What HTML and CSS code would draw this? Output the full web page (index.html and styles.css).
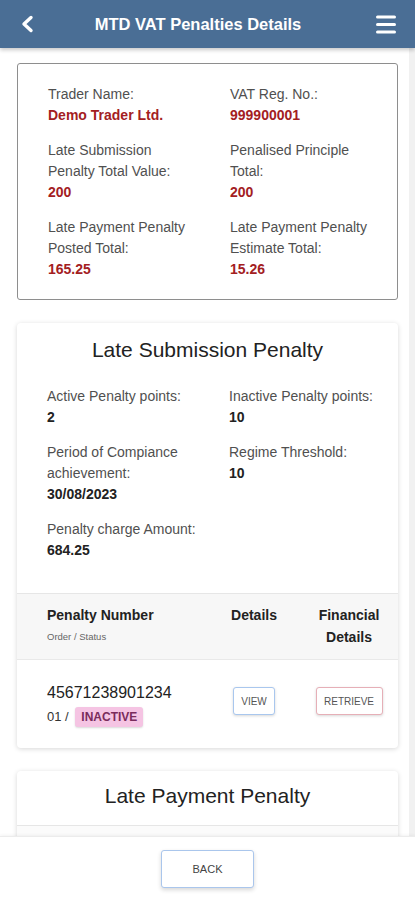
FILE: index.html
```html
<!DOCTYPE html>
<html lang="en">
<head>
<meta charset="utf-8">
<title>MTD VAT Penalties Details</title>
<link rel="stylesheet" href="styles.css">
</head>
<body>
<header class="topbar">
  <span class="icon-back">
    <svg width="14" height="18" viewBox="0 0 14 18"><path d="M11 2.5 L4 9 L11 15.5" stroke="#fff" stroke-width="3.4" fill="none" stroke-linecap="round" stroke-linejoin="round"/></svg>
  </span>
  <h1 class="topbar-title">MTD VAT Penalties Details</h1>
  <span class="icon-menu">
    <svg width="20" height="19" viewBox="0 0 20 19"><g stroke="#fff" stroke-width="3" stroke-linecap="round"><line x1="1.5" y1="2" x2="18.5" y2="2"/><line x1="1.5" y1="9.5" x2="18.5" y2="9.5"/><line x1="1.5" y1="17" x2="18.5" y2="17"/></g></svg>
  </span>
</header>

<div class="viewport">
  <main class="content">
    <section class="summary-card">
      <div class="fields">
        <div class="field"><div class="label">Trader Name:</div><div class="value red">Demo Trader Ltd.</div></div>
        <div class="field"><div class="label">VAT Reg. No.:</div><div class="value red">999900001</div></div>
        <div class="field"><div class="label">Late Submission<br>Penalty Total Value:</div><div class="value red">200</div></div>
        <div class="field"><div class="label">Penalised Principle<br>Total:</div><div class="value red">200</div></div>
        <div class="field"><div class="label">Late Payment Penalty<br>Posted Total:</div><div class="value red">165.25</div></div>
        <div class="field"><div class="label">Late Payment Penalty<br>Estimate Total:</div><div class="value red">15.26</div></div>
      </div>
    </section>

    <section class="card">
      <h2 class="card-title">Late Submission Penalty</h2>
      <div class="fields card-fields">
        <div class="field"><div class="label">Active Penalty points:</div><div class="value">2</div></div>
        <div class="field"><div class="label">Inactive Penalty points:</div><div class="value">10</div></div>
        <div class="field"><div class="label">Period of Compiance<br>achievement:</div><div class="value">30/08/2023</div></div>
        <div class="field"><div class="label">Regime Threshold:</div><div class="value">10</div></div>
        <div class="field"><div class="label">Penalty charge Amount:</div><div class="value">684.25</div></div>
      </div>
      <div class="table-head">
        <div class="th-main">
          <div class="th-title">Penalty Number</div>
          <div class="th-sub">Order / Status</div>
        </div>
        <div class="th-center">Details</div>
        <div class="th-center th-fin">Financial<br>Details</div>
      </div>
      <div class="table-row">
        <div class="td-main">
          <div class="penalty-no">45671238901234</div>
          <div class="order">01 / <span class="badge">INACTIVE</span></div>
        </div>
        <div class="td-center"><button class="btn btn-blue">VIEW</button></div>
        <div class="td-center td-fin"><button class="btn btn-red">RETRIEVE</button></div>
      </div>
    </section>

    <section class="card">
      <h2 class="card-title card-title-lpp">Late Payment Penalty</h2>
      <div class="card-body-lpp"></div>
    </section>
  </main>
  <div class="scroll-track"></div>
</div>

<footer class="bottombar">
  <button class="btn btn-back">BACK</button>
</footer>
</body>
</html>
```
FILE: styles.css
```css
* { box-sizing: border-box; }

html, body {
  margin: 0;
  padding: 0;
}

body {
  width: 415px;
  height: 900px;
  overflow: hidden;
  display: flex;
  flex-direction: column;
  background: #ffffff;
  font-family: "Liberation Sans", Arial, sans-serif;
  color: #333;
}

.topbar {
  height: 48px;
  flex: 0 0 48px;
  background: #4a6e95;
  display: flex;
  align-items: center;
  padding: 0 19px 0 20px;
  box-shadow: 0 2px 4px rgba(0, 0, 0, 0.22);
  position: relative;
  z-index: 2;
}

.icon-back, .icon-menu {
  display: flex;
  align-items: center;
}

.topbar-title {
  flex: 1;
  margin: 0;
  padding-right: 14px;
  text-align: center;
  color: #ffffff;
  font-size: 16.5px;
  font-weight: bold;
}

.viewport {
  flex: 1;
  display: flex;
  overflow: hidden;
  background: #ffffff;
}

.content {
  flex: 1;
  padding: 15px 11px 0 17px;
  display: flex;
  flex-direction: column;
  gap: 23px;
}

.scroll-track {
  width: 6px;
  flex: 0 0 6px;
  background: #f1f1f1;
}

.summary-card {
  border: 1px solid #8e8e8e;
  border-radius: 3px;
  padding: 20px 10px 19px 30px;
  background: #fff;
}

.fields {
  display: grid;
  grid-template-columns: 150px 150px;
  column-gap: 32px;
  row-gap: 14px;
}

.field {
  font-size: 14px;
  line-height: 21px;
}

.label {
  color: #505050;
  white-space: nowrap;
}

.value {
  font-weight: bold;
  color: #222;
}

.value.red {
  color: #a3201f;
}

.card {
  background: #fff;
  border-radius: 4px;
  box-shadow: 0 1px 5px rgba(0, 0, 0, 0.16);
  flex-shrink: 0;
}

.card-title {
  margin: 0;
  padding-top: 14px;
  text-align: center;
  font-size: 21px;
  line-height: 26px;
  font-weight: normal;
  color: #222;
}

.card-fields {
  padding: 23px 10px 32px 30px;
}

.table-head {
  display: grid;
  grid-template-columns: 172px 70px 98px;
  padding: 10px 10px 11px 30px;
  background: #f7f7f7;
  border-top: 1px solid #e6e6e6;
  border-bottom: 1px solid #e9e9e9;
}

.th-title {
  font-size: 14px;
  line-height: 22px;
  font-weight: bold;
  color: #222;
}

.th-sub {
  font-size: 9.5px;
  line-height: 22px;
  color: #666;
}

.th-center {
  text-align: center;
  font-size: 14px;
  line-height: 22px;
  font-weight: bold;
  color: #222;
}

.th-fin, .td-fin {
  padding-left: 22px;
}

.table-row {
  display: grid;
  grid-template-columns: 172px 70px 98px;
  padding: 22px 10px 18px 30px;
}

.penalty-no {
  font-size: 16px;
  line-height: 22px;
  color: #222;
}

.order {
  font-size: 13px;
  line-height: 26px;
  color: #333;
}

.badge {
  display: inline-block;
  background: #f5c4e3;
  color: #7a2b5c;
  font-weight: bold;
  font-size: 12px;
  line-height: 20px;
  padding: 0 6px;
  border-radius: 3px;
  box-shadow: 0 1px 2px rgba(0, 0, 0, 0.15);
  margin-left: 3px;
}

.td-center {
  display: flex;
  justify-content: center;
  align-items: flex-start;
  padding-top: 5px;
}

.btn {
  font-family: "Liberation Sans", Arial, sans-serif;
  background: #fff;
  color: #555;
  border-radius: 3px;
  cursor: pointer;
  box-shadow: 0 1px 3px rgba(0, 0, 0, 0.16);
}

.btn-blue {
  width: 42px;
  height: 28px;
  border: 1px solid #a9c7ee;
  font-size: 10px;
  padding: 0;
}

.btn-red {
  width: 67px;
  height: 28px;
  border: 1px solid #e6afb7;
  font-size: 10px;
  padding: 0;
}

.card-title-lpp {
  padding-top: 12px;
  padding-bottom: 16px;
}

.card-body-lpp {
  height: 120px;
  border-top: 1px solid #e6e6e6;
  background: #fbfbfb;
}

.bottombar {
  flex: 0 0 64px;
  height: 64px;
  background: #fff;
  border-top: 1px solid #ececec;
  box-shadow: 0 -1px 3px rgba(0, 0, 0, 0.05);
  display: flex;
  justify-content: center;
  align-items: flex-start;
  padding-top: 13px;
  position: relative;
  z-index: 2;
}

.btn-back {
  width: 93px;
  height: 38px;
  border: 1px solid #aac6ec;
  font-size: 11px;
  color: #444;
  padding: 0;
  box-shadow: 0 2px 4px rgba(0, 0, 0, 0.16);
}
```
